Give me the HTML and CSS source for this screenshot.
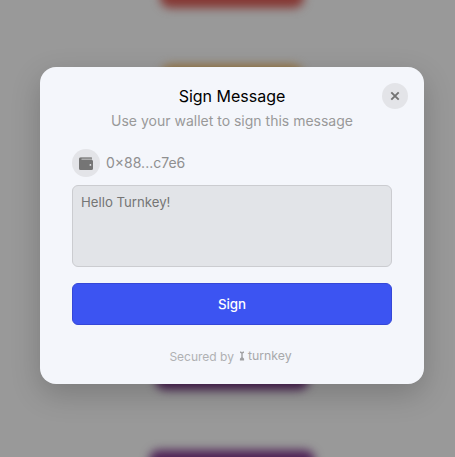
FILE: index.html
```html
<!DOCTYPE html>
<html lang="en">
<head>
<meta charset="utf-8">
<title>Sign Message</title>
<link rel="stylesheet" href="styles.css">
</head>
<body>
<div class="page" aria-hidden="true">
  <div class="tile red"></div>
  <div class="tile orange"></div>
  <div class="tile violet"></div>
  <div class="tile purple"></div>
</div>
<main class="overlay">
  <section class="modal" role="dialog" aria-labelledby="title">
    <button class="close" aria-label="Close">
      <svg width="10" height="10" viewBox="0 0 10 10"><path d="M1.3 1.3l7.4 7.4M8.7 1.3l-7.4 7.4"/></svg>
    </button>
    <h1 class="title" id="title">Sign Message</h1>
    <p class="subtitle">Use your wallet to sign this message</p>
    <div class="account">
      <span class="avatar">
        <svg width="14" height="13" viewBox="0 0 14 13">
          <path class="flap" d="M2 0h10a1 1 0 0 1 1 1v2H0V2a2 2 0 0 1 2-2z"/>
          <path class="body" fill-rule="evenodd" d="M0 2.2C0 1.3.8.8 1.8.8H13v.8H3a.7.7 0 0 0 0 1.4h9.7A1.3 1.3 0 0 1 14 4.3v7.2a1.5 1.5 0 0 1-1.5 1.5h-11A1.5 1.5 0 0 1 0 11.5zM11.4 7a.9.9 0 1 0 0 1.8.9.9 0 0 0 0-1.8z"/>
        </svg>
      </span>
      <span class="address">0×88...c7e6</span>
    </div>
    <div class="message">Hello Turnkey!</div>
    <button class="sign">Sign</button>
    <footer class="footer">
      <span>Secured by</span>
      <span class="brand">
        <svg width="6" height="10" viewBox="0 0 6 10"><path d="M1 .5h1l1 .7 1-.7h1v1.2L3.7 2.6v3.6l1.4 1.5v1.8H.9V7.7l1.4-1.5V2.6L1 1.7z"/></svg>
        <span class="wordmark">turnkey</span>
      </span>
    </footer>
  </section>
</main>
</body>
</html>
```
FILE: styles.css
```css
* { box-sizing: border-box; }
body {
  margin: 0;
  width: 455px;
  height: 457px;
  overflow: hidden;
  position: relative;
  background: #999;
  font-family: Inter, "Liberation Sans", sans-serif;
}
button { font: inherit; padding: 0; }
.page {
  position: absolute;
  inset: 0 0 0 9px;
  overflow: hidden;
  display: flex;
  flex-direction: column;
  align-items: center;
}
.tile { flex: none; height: 56px; border-radius: 10px; filter: blur(5px); }
.red { width: 144px; margin-top: -48px; background: #853834; }
.orange { width: 142px; margin-top: 57px; background: #94703a; }
.violet { width: 154px; margin-top: 213px; background: #482050; }
.purple { width: 166px; margin-top: 60px; background: #4f2356; }
.overlay {
  position: relative;
  padding: 67px 31px 0 40px;
}
.modal {
  position: relative;
  width: 384px;
  height: 317px;
  padding: 19px 32px 0;
  border-radius: 16px;
  background: #f4f6fb;
  box-shadow: 0 10px 30px rgba(0, 0, 0, .2);
}
.close {
  position: absolute;
  top: 16px;
  right: 16px;
  width: 26px;
  height: 26px;
  border: 0;
  border-radius: 50%;
  background: #e3e4e8;
  display: grid;
  place-items: center;
}
.close path { stroke: #737373; stroke-width: 1.9; fill: none; }
.title {
  margin: 0;
  font-size: 16px;
  line-height: 21px;
  font-weight: 400;
  text-align: center;
  color: #000;
}
.subtitle {
  margin: 4px 0 0;
  font-size: 14px;
  line-height: 20px;
  text-align: center;
  color: #999;
}
.account {
  display: flex;
  align-items: center;
  gap: 6px;
  margin-top: 18px;
}
.avatar {
  width: 28px;
  height: 28px;
  border-radius: 50%;
  background: #e3e4e8;
  display: grid;
  place-items: center;
}
.flap { fill: #adadae; }
.body { fill: #757575; }
.address { font-size: 14px; line-height: 20px; color: #8f8f90; }
.message {
  height: 82px;
  margin-top: 8px;
  padding: 8px;
  border: 1px solid #cbccd0;
  border-radius: 6px;
  background: #e2e4e8;
  font-size: 13.2px;
  line-height: 17px;
  color: #757575;
}
.sign {
  display: block;
  width: 100%;
  height: 42px;
  margin-top: 16px;
  border: 1px solid #3547d7;
  border-radius: 6px;
  background: #3c54f2;
  color: #fff;
  font-size: 13.33px;
  font-weight: 500;
}
.footer {
  display: flex;
  justify-content: center;
  align-items: center;
  gap: 5px;
  margin: 23px 3px 0 0;
  font-size: 12px;
  line-height: 18px;
  color: #b0b1b3;
}
.brand { display: flex; align-items: center; gap: 3px; margin-top: -2px; }
.brand path { fill: #a0a0a2; }
.wordmark { font-size: 12.3px; color: #a8a9ab; }
```
